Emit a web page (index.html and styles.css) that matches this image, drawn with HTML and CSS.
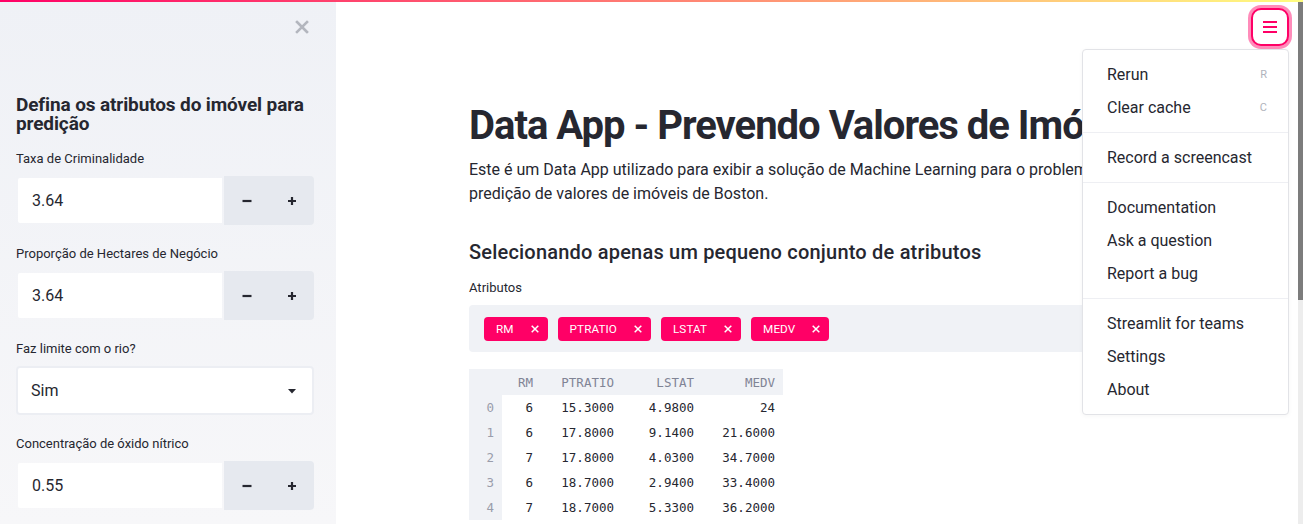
FILE: index.html
```html
<!DOCTYPE html>
<html lang="pt">
<head>
<meta charset="utf-8">
<title>Data App - Prevendo Valores de Imóveis</title>
<link rel="stylesheet" href="styles.css">
</head>
<body>
<div class="decoration"></div>
<div class="app">
  <aside class="sidebar">
    <div class="sidebar-top">
      <button class="close-btn" aria-label="Fechar">
        <svg width="14" height="14" viewBox="0 0 14 14"><path d="M2 2L12 12M12 2L2 12" stroke="currentColor" stroke-width="2.6" stroke-linecap="square" fill="none"/></svg>
      </button>
    </div>
    <h2 class="sb-title">Defina os atributos do imóvel para predição</h2>

    <div class="widget">
      <label class="wlabel">Taxa de Criminalidade</label>
      <div class="num">
        <div class="num-field">3.64</div>
        <div class="num-btns">
          <button class="step"><svg width="10" height="10" viewBox="0 0 10 10"><path d="M0.5 5H9.5" stroke="currentColor" stroke-width="2.2"/></svg></button>
          <button class="step"><svg width="10" height="10" viewBox="0 0 10 10"><path d="M1 5H9M5 1V9" stroke="currentColor" stroke-width="2.2"/></svg></button>
        </div>
      </div>
    </div>

    <div class="widget">
      <label class="wlabel">Proporção de Hectares de Negócio</label>
      <div class="num">
        <div class="num-field">3.64</div>
        <div class="num-btns">
          <button class="step"><svg width="10" height="10" viewBox="0 0 10 10"><path d="M0.5 5H9.5" stroke="currentColor" stroke-width="2.2"/></svg></button>
          <button class="step"><svg width="10" height="10" viewBox="0 0 10 10"><path d="M1 5H9M5 1V9" stroke="currentColor" stroke-width="2.2"/></svg></button>
        </div>
      </div>
    </div>

    <div class="widget">
      <label class="wlabel">Faz limite com o rio?</label>
      <div class="select">
        <span class="select-value">Sim</span>
        <svg class="caret" width="8" height="5" viewBox="0 0 8 5"><path d="M0 0H8L4 4.5Z" fill="currentColor"/></svg>
      </div>
    </div>

    <div class="widget">
      <label class="wlabel">Concentração de óxido nítrico</label>
      <div class="num">
        <div class="num-field">0.55</div>
        <div class="num-btns">
          <button class="step"><svg width="10" height="10" viewBox="0 0 10 10"><path d="M0.5 5H9.5" stroke="currentColor" stroke-width="2.2"/></svg></button>
          <button class="step"><svg width="10" height="10" viewBox="0 0 10 10"><path d="M1 5H9M5 1V9" stroke="currentColor" stroke-width="2.2"/></svg></button>
        </div>
      </div>
    </div>
  </aside>

  <main class="main">
    <div class="block">
      <h1 class="title">Data App - Prevendo Valores de Imóveis</h1>
      <p class="lead">Este é um Data App utilizado para exibir a solução de Machine Learning para o problema de predição de valores de imóveis de Boston.</p>
      <h3 class="subtitle">Selecionando apenas um pequeno conjunto de atributos</h3>

      <div class="widget main-widget">
        <label class="wlabel">Atributos</label>
        <div class="multi">
          <span class="chip">RM<svg class="chip-x" width="8" height="8" viewBox="0 0 8 8"><path d="M0.7 0.7L7.3 7.3M7.3 0.7L0.7 7.3" stroke="currentColor" stroke-width="1.5"/></svg></span>
          <span class="chip">PTRATIO<svg class="chip-x" width="8" height="8" viewBox="0 0 8 8"><path d="M0.7 0.7L7.3 7.3M7.3 0.7L0.7 7.3" stroke="currentColor" stroke-width="1.5"/></svg></span>
          <span class="chip">LSTAT<svg class="chip-x" width="8" height="8" viewBox="0 0 8 8"><path d="M0.7 0.7L7.3 7.3M7.3 0.7L0.7 7.3" stroke="currentColor" stroke-width="1.5"/></svg></span>
          <span class="chip">MEDV<svg class="chip-x" width="8" height="8" viewBox="0 0 8 8"><path d="M0.7 0.7L7.3 7.3M7.3 0.7L0.7 7.3" stroke="currentColor" stroke-width="1.5"/></svg></span>
        </div>
      </div>

      <table class="df">
        <colgroup>
          <col class="c-idx"><col class="c-rm"><col class="c-wide"><col class="c-wide2"><col class="c-wide">
        </colgroup>
        <thead>
          <tr><th class="idx"></th><th>RM</th><th>PTRATIO</th><th>LSTAT</th><th>MEDV</th></tr>
        </thead>
        <tbody>
          <tr><th class="idx">0</th><td>6</td><td>15.3000</td><td>4.9800</td><td>24</td></tr>
          <tr><th class="idx">1</th><td>6</td><td>17.8000</td><td>9.1400</td><td>21.6000</td></tr>
          <tr><th class="idx">2</th><td>7</td><td>17.8000</td><td>4.0300</td><td>34.7000</td></tr>
          <tr><th class="idx">3</th><td>6</td><td>18.7000</td><td>2.9400</td><td>33.4000</td></tr>
          <tr><th class="idx">4</th><td>7</td><td>18.7000</td><td>5.3300</td><td>36.2000</td></tr>
        </tbody>
      </table>
    </div>

    <button class="menu-btn" aria-label="Menu">
      <svg width="14" height="12" viewBox="0 0 14 12"><path d="M0 1H14M0 6H14M0 11H14" stroke="currentColor" stroke-width="1.8"/></svg>
    </button>

    <div class="menu">
      <ul class="menu-group">
        <li class="menu-item">Rerun<span class="kbd">R</span></li>
        <li class="menu-item">Clear cache<span class="kbd">C</span></li>
      </ul>
      <ul class="menu-group">
        <li class="menu-item">Record a screencast</li>
      </ul>
      <ul class="menu-group">
        <li class="menu-item">Documentation</li>
        <li class="menu-item">Ask a question</li>
        <li class="menu-item">Report a bug</li>
      </ul>
      <ul class="menu-group">
        <li class="menu-item">Streamlit for teams</li>
        <li class="menu-item">Settings</li>
        <li class="menu-item">About</li>
      </ul>
    </div>
  </main>

  <div class="scrollbar"><div class="thumb"></div></div>
</div>
</body>
</html>
```

FILE: styles.css
```css
* { box-sizing: border-box; }

html, body {
  margin: 0;
  padding: 0;
  height: 100%;
}

body {
  font-family: Roboto, "Liberation Sans", Arial, sans-serif;
  color: #262730;
  background: #ffffff;
  overflow: hidden;
}

.decoration {
  position: absolute;
  top: 0;
  left: 0;
  right: 0;
  height: 2px;
  background: linear-gradient(90deg, #ff0066, #fffd80);
  z-index: 10;
}

.app {
  display: flex;
  height: 100vh;
}

/* ---------- Sidebar ---------- */
.sidebar {
  width: 336px;
  flex: none;
  background: linear-gradient(180deg, #eff1f6 0%, #f7f7f9 100%);
  padding: 20px 22px 0 16px;
  overflow: hidden;
}

.sidebar-top {
  display: flex;
  justify-content: flex-end;
  height: 14px;
  padding-right: 5px;
}

.close-btn {
  border: 0;
  background: none;
  padding: 0;
  width: 14px;
  height: 14px;
  color: #b3b6be;
  display: flex;
}

.sb-title {
  margin: 61px 0 16px;
  font-size: 19px;
  line-height: 19px;
  font-weight: 700;
  letter-spacing: -0.12px;
}

.widget {
  margin-bottom: 19px;
}

.wlabel {
  display: block;
  font-size: 13px;
  line-height: 20px;
  margin-bottom: 7px;
  color: #262730;
}

.num {
  display: flex;
  height: 49px;
}

.num-field {
  flex: 1;
  background: #ffffff;
  background-clip: padding-box;
  border: 2px solid transparent;
  border-radius: 4px 0 0 4px;
  font-size: 16px;
  display: flex;
  align-items: center;
  padding-left: 14px;
}

.num-btns {
  width: 90px;
  display: flex;
  background: #e6e9ef;
  border-radius: 0 4px 4px 0;
}

.step {
  flex: 1;
  border: 0;
  background: none;
  padding: 0;
  color: #262730;
  display: flex;
  align-items: center;
  justify-content: center;
}

.select {
  height: 49px;
  background: #ffffff;
  border: 2px solid #eceef3;
  border-radius: 4px;
  display: flex;
  align-items: center;
  justify-content: space-between;
  padding: 0 16px 0 13px;
  font-size: 16px;
}

.caret {
  color: #262730;
  margin-top: 1px;
}

/* ---------- Main ---------- */
.main {
  flex: 1;
  position: relative;
  overflow: hidden;
  padding-left: 2px;
}

.block {
  max-width: 730px;
  margin: 0 auto;
  padding: 99px 16px 0;
}

.title {
  margin: 0;
  font-size: 40px;
  line-height: 53px;
  font-weight: 700;
  letter-spacing: -1px;
  white-space: nowrap;
}

.lead {
  margin: 6px 0 0;
  font-size: 16px;
  line-height: 24px;
}

.subtitle {
  margin: 34px 0 14px;
  font-size: 20px;
  line-height: 24px;
  font-weight: 500;
  letter-spacing: 0.2px;
}

.main-widget {
  margin-bottom: 17px;
}

.multi {
  height: 47px;
  background: #f0f2f6;
  border-radius: 4px;
  display: flex;
  align-items: center;
  gap: 10px;
  padding: 0 15px;
}

.chip {
  height: 24px;
  background: #ff0066;
  color: #ffffff;
  border-radius: 4px;
  display: inline-flex;
  align-items: center;
  padding: 0 9px 0 12px;
  font-size: 11.7px;
  letter-spacing: 0.1px;
}

.chip-x {
  margin-left: 17px;
}

.df {
  border-collapse: collapse;
  table-layout: fixed;
  width: 314px;
  font-family: "DejaVu Sans Mono", "Liberation Mono", monospace;
  font-size: 12.5px;
}

.c-idx { width: 33px; }
.c-rm { width: 39px; }
.c-wide { width: 81px; }
.c-wide2 { width: 80px; }

.df th,
.df td {
  padding: 0 8px;
  text-align: right;
  white-space: nowrap;
}

.df thead th {
  height: 26px;
  background: #f0f2f6;
  color: #808495;
  font-weight: 400;
}

.df tbody td,
.df tbody th {
  height: 25px;
}

.df tbody th.idx {
  background: #f0f2f6;
  color: #9a9dab;
  font-weight: 400;
}

.df td {
  color: #262730;
}

/* ---------- Header menu ---------- */
.menu-btn {
  position: absolute;
  top: 8px;
  right: 9px;
  width: 38px;
  height: 38px;
  border: 2px solid #ff0066;
  border-radius: 10px;
  background: #ffffff;
  box-shadow: 0 0 0 3px rgba(255, 0, 102, 0.45);
  color: #ff0066;
  display: flex;
  align-items: center;
  justify-content: center;
  padding: 0;
}

.menu {
  position: absolute;
  top: 49px;
  right: 9px;
  width: 207px;
  background: #ffffff;
  border: 1px solid #e2e3e7;
  border-radius: 4px;
  box-shadow: 0 1px 4px rgba(0, 0, 0, 0.04);
  z-index: 5;
}

.menu-group {
  list-style: none;
  margin: 0;
  padding: 8px 0;
  border-top: 1px solid #eeeff3;
}

.menu-group:first-child {
  border-top: 0;
}

.menu-item {
  height: 33px;
  display: flex;
  align-items: center;
  justify-content: space-between;
  padding: 0 24px;
  font-size: 16px;
  color: #262730;
}

.kbd {
  font-size: 11px;
  color: #b0b3bc;
  margin-right: -3px;
}

/* ---------- Scrollbar ---------- */
.scrollbar {
  width: 5px;
  flex: none;
  background: #ededed;
}

.thumb {
  height: 300px;
  background: #7c7c7c;
}
```
